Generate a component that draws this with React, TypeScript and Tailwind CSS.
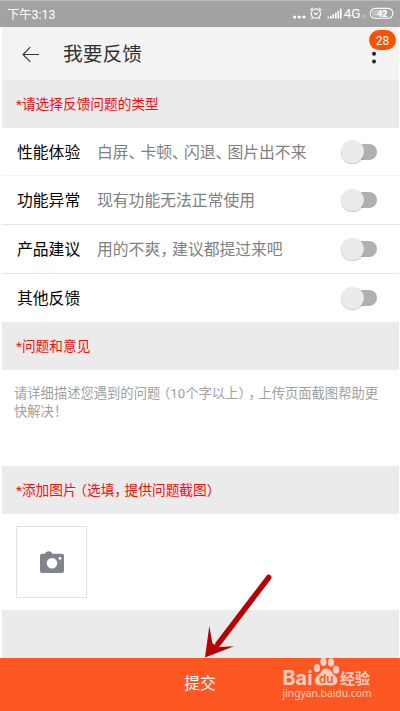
import React, { useState } from 'react';

const feedbackTypes = [
    { title: '性能体验', description: '白屏、卡顿、闪退、图片出不来', style: 'h-[48px] border-b border-[#f3f3f3]' },
    { title: '功能异常', description: '现有功能无法正常使用', style: 'h-[49px] border-b border-[#e6e6e6]' },
    { title: '产品建议', description: '用的不爽，建议都提过来吧', style: 'h-[49px] border-b border-[#e6e6e6]' },
    { title: '其他反馈', description: '', style: 'h-[48px]' },
];

// Tightens full-width punctuation
const CjkText: React.FC<{ children: string }> = ({ children }) => (
    <span className="whitespace-nowrap [text-spacing-trim:space-all]">
        {children.split(/([、，（）])/).map((part, i) => {
            if (part === '（') return <span key={i} className="-ml-[0.25em]">{part}</span>;
            if (part === '、' || part === '，' || part === '）') return <span key={i} className="-mr-[0.25em]">{part}</span>;
            return part;
        })}
    </span>
);

const StatusBar: React.FC = () => (
    <div className="h-[27px] shrink-0 bg-[#a3a3a3] border-t border-[#bdbdbd] flex items-center justify-between pl-[7px] pr-[6px] text-white">
        <span className="pt-[2px] text-[12.3px] leading-none">下午3:13</span>
        <svg width="102" height="16" viewBox="0 0 102 16" fill="none" stroke="white">
            <g fill="white" stroke="none">
                <circle cx="2.6" cy="11" r="1.6" />
                <circle cx="7.3" cy="11" r="1.6" />
                <circle cx="12" cy="11" r="1.6" />
                <path d="M35.5 10.7h1.6v1.8h-1.6zM38 9.7h1.6v2.8H38zM40.5 8.2h1.6v4.3h-1.6zM43 6.5h1.6v6H43zM45.5 4.7h1.6v7.8h-1.6zM48 2.7h1.6v9.8H48z" />
            </g>
            <circle cx="23.8" cy="7.6" r="4.7" strokeWidth="1.1" />
            <path d="M18.1 4.4l2.6-2.5M29.5 4.4l-2.6-2.5M21.7 6.8l2 1.7 2.2-1.7M20.5 11.8l-1 1.3M27.1 11.8l1 1.3" strokeWidth="1.1" />
            <text x="51.7" y="12.4" fill="white" stroke="none" fontFamily="Roboto, sans-serif" fontSize="13.5">4G</text>
            <path d="M71 8.5v4M73.5 8.5v4" strokeWidth="0.8" opacity="0.5" />
            <rect x="78.2" y="2.4" width="22.8" height="9.8" rx="4.9" strokeWidth="1.1" />
            <rect x="80" y="4" width="15" height="6.6" rx="3" fill="white" fillOpacity="0.35" stroke="none" />
            <text x="85" y="10.6" fill="white" stroke="none" fontFamily="Roboto, sans-serif" fontSize="9" fontWeight="700">42</text>
        </svg>
    </div>
);

const SectionTitle: React.FC<{ children: string }> = ({ children }) => (
    <div className="h-12 shrink-0 bg-[#ebebeb] flex items-center pt-px pl-[14px] text-[13.7px] leading-none text-[#ff0909]">
        <CjkText>{children}</CjkText>
    </div>
);

const Toggle: React.FC<{ checked: boolean; onChange: () => void }> = ({ checked, onChange }) => (
    <button role="switch" aria-checked={checked} onClick={onChange} className="w-[36px] h-6 flex items-center">
        <span className={`w-[36px] h-[16px] rounded-full bg-[#b0b0b0] flex items-center ${checked ? 'justify-end' : 'justify-start'}`}>
            <span className="w-[22.5px] h-[22.5px] rounded-full bg-[#ebebeb] shadow-[0_1px_1px_rgba(0,0,0,0.22)]" />
        </span>
    </button>
);

const Watermark: React.FC = () => (
    <svg className="absolute left-[282px] top-[656px]" width="94" height="50" viewBox="0 0 94 50" fill="#ffd0c2">
        <text x="0.5" y="28.7" fontFamily="Inter, sans-serif" fontSize="20" fontWeight="700" textLength="30" lengthAdjust="spacingAndGlyphs">Bai</text>
        <ellipse cx="35" cy="12" rx="3.1" ry="4" />
        <ellipse cx="41.4" cy="5.7" rx="3.1" ry="4.2" />
        <ellipse cx="49" cy="6.4" rx="3.1" ry="4.2" />
        <ellipse cx="54" cy="13.7" rx="3.1" ry="4" />
        <path d="M44.5 12.5c-3.8 0-4.8 3.2-6.9 5.2-2.5 2.2-4.5 3.8-4.5 6.9 0 3.2 2.2 4.8 5.4 4.8 2 0 3.5-.5 5.5-.5s3.5.5 5.5.5c3.5 0 5.9-1.6 5.9-4.8 0-3-2.2-4.7-4.3-6.9-2-2-2.8-5.2-6.6-5.2z" />
        <text x="37" y="26.7" fill="#ff5722" fontFamily="Inter, sans-serif" fontSize="11.5" fontWeight="600" textLength="14.5" lengthAdjust="spacingAndGlyphs">du</text>
        <text x="58" y="27.7" fontFamily="'Noto Sans CJK SC', sans-serif" fontSize="15" fontWeight="700">经验</text>
        <text x="0.5" y="40.7" fontFamily="'Noto Sans', sans-serif" fontSize="11.5" textLength="89" lengthAdjust="spacingAndGlyphs">jingyan.baidu.com</text>
    </svg>
);

export default function App() {
    const [selected, setSelected] = useState<string | null>(null);

    return (
        <div className="relative w-[400px] h-[711px] overflow-hidden bg-white flex flex-col font-[Roboto,'Noto_Sans_CJK_SC',sans-serif]">
            <StatusBar />

            <div className="flex flex-col pl-[2px] pr-px">
                {/* Header */}
                <div className="h-[53px] shrink-0 bg-[#f3f3f3] flex items-center pl-5 pr-[22px]">
                    <svg width="18" height="18" viewBox="0 0 18 18" fill="none" stroke="#333" strokeWidth="1.1">
                        <path d="M17 9.5H1M8.3 2.2L1 9.5l7.3 7.3" />
                    </svg>
                    <h1 className="ml-[23px] pt-[2px] flex-1 text-[19.8px] leading-none text-[#333]">我要反馈</h1>
                    <svg width="6" height="22" viewBox="0 0 6 22" fill="#222">
                        <circle cx="3" cy="3" r="2" />
                        <circle cx="3" cy="10.7" r="2" />
                        <circle cx="3" cy="18.4" r="2" />
                    </svg>
                </div>

                <SectionTitle>*请选择反馈问题的类型</SectionTitle>

                {/* Feedback types */}
                {feedbackTypes.map((type) => (
                    <div key={type.title} className={`${type.style} flex items-center pl-[15px] pr-[22px] text-[15.8px] leading-none`}>
                        <span className="w-[80px] pt-[2px] text-black">{type.title}</span>
                        <span className="flex-1 pt-[2px] text-[#808080]"><CjkText>{type.description}</CjkText></span>
                        <Toggle
                            checked={selected === type.title}
                            onChange={() => setSelected(selected === type.title ? null : type.title)}
                        />
                    </div>
                ))}

                <SectionTitle>*问题和意见</SectionTitle>

                <div className="h-24 shrink-0 pl-3 pr-[10px] pt-[15px] text-[13.3px] leading-[18px] text-[#a0a0a0]">
                    <p><CjkText>请详细描述您遇到的问题（10个字以上），上传页面截图帮助更</CjkText></p>
                    <p>快解决！</p>
                </div>

                <SectionTitle>*添加图片（选填，提供问题截图）</SectionTitle>

                {/* Photo picker */}
                <div className="h-24 shrink-0 pl-[14px] pt-[12px]">
                    <button className="w-[71px] h-[72px] border border-[#e2e2e2] flex items-center justify-center">
                        <svg width="24" height="22" viewBox="0 0 24 22" fill="#80848c">
                            <path fillRule="evenodd" d="M5.2 2.8C5.5 1.2 6.7.3 8.7.3s3.2.9 3.5 2.5H22a2 2 0 0 1 2 2V20a2 2 0 0 1-2 2H2a2 2 0 0 1-2-2V4.8a2 2 0 0 1 2-2zM12 7a5.3 5.3 0 1 0 0 10.6a5.3 5.3 0 0 0 0-10.6zM20 6a1.4 1.4 0 1 0 0 2.8a1.4 1.4 0 0 0 0-2.8z" />
                        </svg>
                    </button>
                </div>

                <div className="h-12 shrink-0 bg-[#ebebeb]" />
            </div>

            <button className="h-[53px] shrink-0 pb-[2px] bg-[#ff5722] text-white text-[15.8px] leading-none">提交</button>

            {/* Unread badge */}
            <span className="absolute left-[369px] top-[30px] w-[27px] h-[20px] pt-px rounded-full bg-[#ff5000] text-white text-[12px] flex items-center justify-center">28</span>

            {/* Pointer to the submit button */}
            <svg className="absolute left-[200px] top-[570px]" width="76" height="92" viewBox="0 0 76 92" fill="#b90000">
                <path d="M68.7 7.5L18 74" stroke="#b90000" strokeWidth="5.5" strokeLinecap="round" />
                <path d="M5 87.5L9.3 56l3.2 17.5 6.5 3.5 15-.7z" />
            </svg>

            <Watermark />
        </div>
    );
}
